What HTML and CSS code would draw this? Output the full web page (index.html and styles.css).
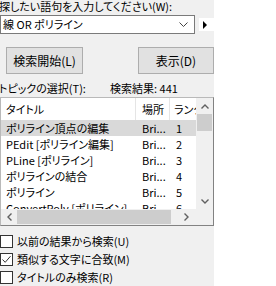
FILE: index.html
```html
<!DOCTYPE html>
<html lang="ja">
  <head>
    <meta charset="UTF-8" />
    <title>検索</title>
    <link rel="stylesheet" href="styles.css">
  </head>
  <body>
    <div class="panel">
      <div class="prompt">探したい語句を入力してください(W):</div>

      <div class="combo-row">
        <div class="combo">
          <span class="combo-text">線 OR ポリライン</span>
          <svg class="chevron" width="9" height="6" viewBox="0 0 9 6"><path d="M0.5 0.5 L4.5 4.5 L8.5 0.5" fill="none" stroke="#444" stroke-width="1"/></svg>
        </div>
        <div class="menu-arrow">
          <svg width="5" height="8" viewBox="0 0 5 8"><path d="M0 0 L4 4 L0 8 Z" fill="#000"/></svg>
        </div>
      </div>

      <div class="btn-row">
        <button class="btn btn-search">検索開始(L)</button>
        <button class="btn btn-show">表示(D)</button>
      </div>

      <div class="status-row">
        <span class="topic">トピックの選択(T):</span>
        <span class="count">検索結果: 441</span>
      </div>

      <div class="list">
        <div class="list-main">
          <div class="list-head">
            <div class="col c-title">タイトル</div>
            <div class="col c-loc">場所</div>
            <div class="col c-rank">ランク</div>
          </div>
          <div class="row selected">
            <div class="col c-title">ポリライン頂点の編集</div>
            <div class="col c-loc">Bri...</div>
            <div class="col c-rank">1</div>
          </div>
          <div class="row">
            <div class="col c-title">PEdit [ポリライン編集]</div>
            <div class="col c-loc">Bri...</div>
            <div class="col c-rank">2</div>
          </div>
          <div class="row">
            <div class="col c-title">PLine [ポリライン]</div>
            <div class="col c-loc">Bri...</div>
            <div class="col c-rank">3</div>
          </div>
          <div class="row">
            <div class="col c-title">ポリラインの結合</div>
            <div class="col c-loc">Bri...</div>
            <div class="col c-rank">4</div>
          </div>
          <div class="row">
            <div class="col c-title">ポリライン</div>
            <div class="col c-loc">Bri...</div>
            <div class="col c-rank">5</div>
          </div>
          <div class="row">
            <div class="col c-title">ConvertPoly [ポリライン]</div>
            <div class="col c-loc">Bri...</div>
            <div class="col c-rank">6</div>
          </div>
        </div>

        <div class="vscroll">
          <div class="arrow">
            <svg width="8" height="5" viewBox="0 0 8 5"><path d="M0.5 4.5 L4 1 L7.5 4.5" fill="none" stroke="#606060" stroke-width="1.4"/></svg>
          </div>
          <div class="vthumb"></div>
          <div class="track"></div>
          <div class="arrow">
            <svg width="8" height="5" viewBox="0 0 8 5"><path d="M0.5 0.5 L4 4 L7.5 0.5" fill="none" stroke="#606060" stroke-width="1.4"/></svg>
          </div>
        </div>

        <div class="hscroll">
          <div class="arrow">
            <svg width="5" height="8" viewBox="0 0 5 8"><path d="M4.5 0.5 L1 4 L4.5 7.5" fill="none" stroke="#606060" stroke-width="1.4"/></svg>
          </div>
          <div class="hthumb"></div>
          <div class="arrow wide">
            <svg width="5" height="8" viewBox="0 0 5 8"><path d="M0.5 0.5 L4 4 L0.5 7.5" fill="none" stroke="#606060" stroke-width="1.4"/></svg>
          </div>
        </div>
        <div class="corner"></div>
      </div>

      <div class="options">
        <label class="check"><span class="box"></span>以前の結果から検索(U)</label>
        <label class="check"><span class="box"><svg width="11" height="11" viewBox="0 0 11 11"><path d="M1.5 5.5 L4.2 8.3 L9.5 2.2" fill="none" stroke="#333" stroke-width="1"/></svg></span>類似する文字に合致(M)</label>
        <label class="check"><span class="box"></span>タイトルのみ検索(R)</label>
      </div>
    </div>
  </body>
</html>
```

FILE: styles.css
```css
body {
  margin: 0;
  background: #fff;
  font-family: "Noto Sans CJK JP", "Noto Sans", sans-serif;
  font-size: 11px;
  font-feature-settings: "palt";
  color: #000;
}

.panel {
  width: 214px;
  height: 286px;
  background: #f0f0f0;
  display: flex;
  flex-direction: column;
  overflow: hidden;
}

.prompt {
  height: 15px;
  line-height: 13px;
  margin-left: -1px;
  white-space: nowrap;
}

/* combo box */

.combo-row {
  display: flex;
  height: 19px;
}

.combo {
  width: 195px;
  box-sizing: border-box;
  border: 1px solid #7a7a7a;
  background: #fff;
  display: flex;
  align-items: center;
  justify-content: space-between;
  padding: 0 6px 0 2px;
}

.combo-text {
  line-height: 15px;
}

.chevron {
  margin-top: 1px;
}

.menu-arrow {
  width: 15px;
  height: 13px;
  margin: 3px 0 0 4px;
  background: #fff;
  display: flex;
  align-items: center;
  padding-left: 4px;
  box-sizing: border-box;
}

/* buttons */

.btn-row {
  display: flex;
  justify-content: space-between;
  margin-top: 13px;
  height: 27px;
  padding-left: 6px;
}

.btn {
  font-family: inherit;
  font-size: 12px;
  font-feature-settings: "palt";
  color: #000;
  background: #e1e1e1;
  border: 1px solid #adadad;
  padding: 0;
  margin: 0;
  height: 27px;
}

.btn-search {
  width: 77px;
}

.btn-show {
  width: 76px;
}

.status-row {
  display: flex;
  height: 16px;
  line-height: 16px;
  margin-top: 6px;
  margin-left: -1px;
  white-space: nowrap;
}

.topic {
  width: 111px;
}

/* list view */

.list {
  margin-top: 1px;
  width: 214px;
  height: 129px;
  box-sizing: border-box;
  border: 1px solid #828282;
  border-top-color: #b9b9b9;
  border-left-color: #b9b9b9;
  background: #fff;
  display: grid;
  grid-template-columns: 195px 17px;
  grid-template-rows: 111px 16px;
}

.list-main {
  overflow: hidden;
}

.list-head,
.row {
  display: flex;
  white-space: nowrap;
}

.list-head {
  height: 22px;
  line-height: 22px;
}

.list-head .col {
  border-right: 1px solid #e5e5e5;
}

.row {
  height: 16px;
  line-height: 16px;
}

.row.selected {
  background: #d9d9d9;
}

.col {
  overflow: hidden;
  box-sizing: border-box;
  flex-shrink: 0;
}

.c-title {
  width: 135px;
  padding-left: 5px;
}

.c-loc {
  width: 34px;
  padding-left: 6px;
}

.c-rank {
  width: 26px;
  padding-left: 6px;
}

.list-head .c-rank {
  padding-left: 4px;
  border-right: none;
}

/* scrollbars */

.vscroll {
  background: #f0f0f0;
  display: flex;
  flex-direction: column;
}

.vscroll .arrow {
  height: 16px;
  display: flex;
  align-items: center;
  justify-content: center;
}

.vthumb {
  height: 17px;
  margin: 0 1px;
  background: #cdcdcd;
}

.track {
  flex: 1;
}

.hscroll {
  background: #f0f0f0;
  display: flex;
  align-items: stretch;
}

.hscroll .arrow {
  width: 16px;
  display: flex;
  align-items: center;
  justify-content: center;
}

.hscroll .arrow.wide {
  width: 25px;
  justify-content: flex-end;
  padding-right: 7px;
  box-sizing: border-box;
}

.hthumb {
  flex: 1;
  margin: 1px 0;
  background: #cdcdcd;
}

.corner {
  background: #f0f0f0;
}

/* options */

.options {
  display: flex;
  flex-direction: column;
  gap: 5px;
  margin-top: 9px;
}

.check {
  display: flex;
  align-items: center;
  gap: 4px;
  height: 13px;
  line-height: 13px;
  white-space: nowrap;
}

.box {
  width: 13px;
  height: 13px;
  box-sizing: border-box;
  border: 1px solid #333;
  background: #fff;
  display: flex;
  align-items: center;
  justify-content: center;
}
```
